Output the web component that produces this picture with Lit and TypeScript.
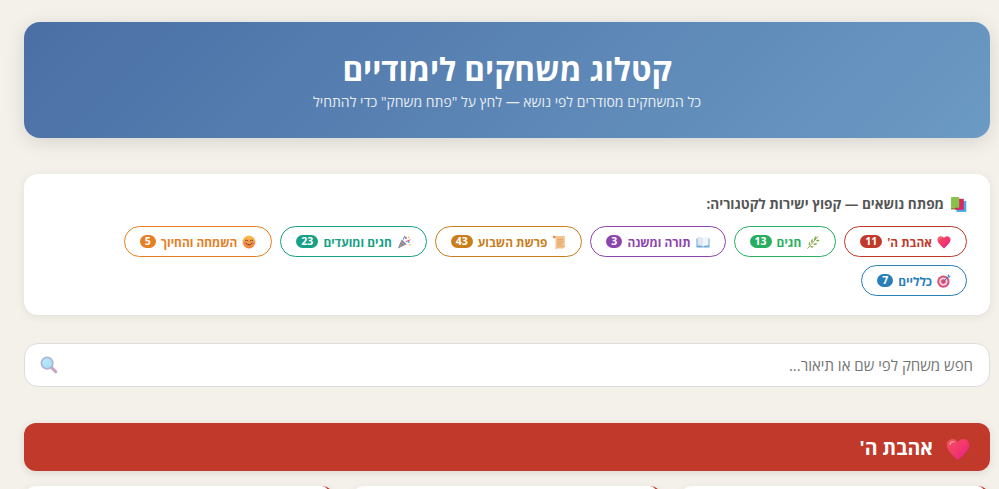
import { LitElement, html, css, svg } from "lit";
import { customElement } from "lit/decorators.js";

const defs = svg`<svg width="0" height="0" class="defs" aria-hidden="true"><defs>
  <linearGradient id="gh" x1="0" y1="0" x2="1" y2="1"><stop offset="0" stop-color="#f2555a"/><stop offset="0.55" stop-color="#f4346f"/><stop offset="1" stop-color="#d61f9a"/></linearGradient>
  <linearGradient id="gs" x1="0" y1="0" x2="0" y2="1"><stop offset="0" stop-color="#fcc04f"/><stop offset="1" stop-color="#f0803c"/></linearGradient>
  <linearGradient id="gl" x1="0" y1="0" x2="1" y2="1"><stop offset="0" stop-color="#bdeafa"/><stop offset="1" stop-color="#9fdff5"/></linearGradient>
</defs></svg>`;

const icons: Record<string, unknown> = {
  heart: svg`<path d="M12 23 C4.5 16.5 .8 12.5 .8 7.8 C.8 4.2 3.6 2 6.8 2 C9 2 11 3.2 12 5.3 C13 3.2 15 2 17.2 2 C20.4 2 23.2 4.2 23.2 7.8 C23.2 12.5 19.5 16.5 12 23 Z" fill="url(#gh)"/><path d="M4 7.5 C4.5 5.3 6.3 4.5 8 4.8" stroke="#f9a0a0" stroke-width="1.2" fill="none" stroke-linecap="round"/>`,
  books: svg`<rect x="9" y="7" width="14" height="15.5" fill="#4aa8ec"/><rect x="7" y="4" width="12.5" height="15.5" fill="#d8285e"/><rect x="1.5" y="1.5" width="11.5" height="15" fill="#86c24a"/><rect x="1.5" y="16.5" width="5.5" height="2.5" fill="#5d9a35"/>`,
  herb: svg`<path d="M3 23 C8 17 13 12 20 3" stroke="#8a9a4a" stroke-width="1.5" fill="none" stroke-linecap="round"/><path d="M14 9 C13 6 15 3 17.5 1.5 C18.5 5 17 8 14 9 Z M17 10 C19 8 21 8 23.5 9 C21 12 19 12 17 10 Z M9 14 C8 11 9 8 11 6.5 C12.5 10 12 12 9 14 Z M12 16 C14 14 17 14 19.5 15 C17 18 14 18 12 16 Z M5 18.5 C4 16 5 13 6 11.5 C8 14 7.5 17 5 18.5 Z M7 20 C9 18 12 19 13.5 20 C11 22.5 9 22 7 20 Z" fill="#86ad4e"/>`,
  book: svg`<path d="M.8 6 H12 V21.5 H.8 Z M12 6 H23.2 V21.5 H12 Z" fill="#6fa8dc"/><path d="M2.5 3.5 C6 3 10 3.5 12 5.5 V20 C10 18 6 17.5 2.5 18 Z" fill="#dfe8f2"/><path d="M21.5 3.5 C18 3 14 3.5 12 5.5 V20 C14 18 18 17.5 21.5 18 Z" fill="#f0f5fa"/>`,
  scroll: svg`<path d="M5 1.5 H22 V19 C22 22 20 23 18 23 H6 V5 C6 3.5 5.6 2.2 5 1.5 Z" fill="#f3c48f"/><path d="M1.5 2.5 C1.5 1.2 3.5 .8 5 1.5 C6 2.2 6 4 6 5.5 H1.5 Z" fill="#d9925a"/><path d="M9 7.5 H19 M9 10.5 H19 M9 13.5 H19 M9 16.5 H16" stroke="#dc9a62" stroke-width="1.2"/><path d="M6 23 C9 23 10 21.5 10 19.5 H22" stroke="#e0a46e" stroke-width="1" fill="none"/>`,
  party: svg`<path d="M1.5 23 L8 7.5 L16.5 16 Z" fill="#6f7fb8"/><path d="M4.5 16 L8.5 20 M6.5 11 L13 17.5" stroke="#e0a35a" stroke-width="1.8"/><circle cx="15" cy="5" r="1.8" fill="#e8467c"/><circle cx="20" cy="12" r="1.8" fill="#41b6e6"/><path d="M11 8 C11 5 12 3 14 1.5" stroke="#46b3e6" stroke-width="1.8" fill="none"/><path d="M15 12 C17 10 20 10 23 8" stroke="#e8467c" stroke-width="1.8" fill="none"/><circle cx="20" cy="4" r="1.5" fill="#f2c230"/><circle cx="22" cy="17" r="1.4" fill="#f2c230"/>`,
  smile: svg`<circle cx="12" cy="12" r="11" fill="url(#gs)"/><ellipse cx="5.5" cy="14" rx="2.6" ry="1.7" fill="#f3636e" opacity=".7"/><ellipse cx="18.5" cy="14" rx="2.6" ry="1.7" fill="#f3636e" opacity=".7"/><path d="M5.5 10 Q8 6.8 10.2 10 M13.8 10 Q16 6.8 18.5 10" stroke="#6b3a2a" stroke-width="1.6" fill="none" stroke-linecap="round"/><path d="M7.2 14.5 Q12 20 16.8 14.5" stroke="#6b3a2a" stroke-width="1.7" fill="none" stroke-linecap="round"/>`,
  target: svg`<circle cx="11" cy="13" r="10.5" fill="#d94f77"/><circle cx="11" cy="13" r="7.2" fill="#f3d3dc"/><circle cx="11" cy="13" r="4.2" fill="#d94f77"/><path d="M11 13 L20 4" stroke="#4a6fa5" stroke-width="1.6"/><path d="M18 2.5 L18.5 5.5 L21.5 6 L23.8 3.5 L20.8 3.2 L20.5 .2 Z" fill="#3f9be0"/>`,
  glass: svg`<path d="M14.5 14.5 L21 21" stroke="#c9a3c7" stroke-width="4.2" stroke-linecap="round"/><circle cx="9.5" cy="9.5" r="7.6" fill="url(#gl)" stroke="#b3b3d6" stroke-width="2.2"/>`,
};

const cats = [
  { icon: "heart", label: "אהבת ה'", n: 11, c: "#c0392b" },
  { icon: "herb", label: "חגים", n: 13, c: "#27ae60" },
  { icon: "book", label: "תורה ומשנה", n: 3, c: "#8e44ad" },
  { icon: "scroll", label: "פרשת השבוע", n: 43, c: "#ca7d1b" },
  { icon: "party", label: "חגים ומועדים", n: 23, c: "#16a085" },
  { icon: "smile", label: "השמחה והחיוך", n: 5, c: "#e67e22" },
  { icon: "target", label: "כלליים", n: 7, c: "#2980b9" },
];

const ic = (name: string, cls = "") =>
  html`<svg class="ic ${cls}" viewBox="0 0 24 24" aria-hidden="true">${icons[name]}</svg>`;

@customElement("app-root")
export class AppRoot extends LitElement {
  static styles = css`
    :host {
      display: block;
      height: 489px;
      overflow: hidden;
      background: #f4f0ea;
      font-family: "Open Sans", "Liberation Sans", sans-serif;
      direction: rtl;
      color: #333;
    }
    .defs { position: absolute; }
    .page {
      display: flex;
      flex-direction: column;
      padding: 22px 9px 0 24px;
    }
    .ic { width: 14px; height: 14px; flex: none; }
    .hero {
      height: 116px;
      box-sizing: border-box;
      border-radius: 16px;
      background: linear-gradient(135deg, #4a6fa5, #6b9ac4);
      box-shadow: 0 4px 20px rgba(0, 0, 0, 0.12);
      color: #fff;
      text-align: center;
      padding-top: 25px;
    }
    h1 {
      margin: 0;
      font-size: 31.5px;
      line-height: 43px;
      font-weight: 700;
    }
    .sub {
      margin-top: 2px;
      font-size: 14px;
      line-height: 19px;
      opacity: 0.85;
    }
    .toc {
      margin-top: 36px;
      height: 141px;
      box-sizing: border-box;
      background: #fff;
      border-radius: 14px;
      box-shadow: 0 2px 10px rgba(0, 0, 0, 0.07);
      padding: 20px 23px 0;
    }
    .toc h2 {
      margin: 0 0 12px;
      display: flex;
      align-items: center;
      gap: 6px;
      font-size: 13.6px;
      line-height: 20px;
      font-weight: 700;
      color: #555;
    }
    .toc h2 .ic { width: 17px; height: 17px; }
    .chips {
      display: flex;
      flex-wrap: wrap;
      gap: 8px;
    }
    .chip {
      display: inline-flex;
      align-items: center;
      gap: 5px;
      height: 31px;
      box-sizing: border-box;
      padding: 0 15px;
      border: 1.5px solid;
      border-radius: 20px;
      font-size: 11.9px;
      font-weight: 700;
      white-space: nowrap;
    }
    .badge {
      color: #fff;
      border-radius: 10px;
      padding: 0 5px;
      font-size: 10.5px;
      line-height: 13px;
    }
    .search {
      margin-top: 28px;
      height: 44px;
      box-sizing: border-box;
      background: #fff;
      border: 1.5px solid #ddd;
      border-radius: 14px;
      display: flex;
      align-items: center;
      justify-content: space-between;
      padding: 0 16px 0 15px;
      font-size: 15px;
      color: #757575;
    }
    .search .ic { width: 18px; height: 18px; }
    .section {
      margin-top: 36px;
      height: 48px;
      box-sizing: border-box;
      background: #c0392b;
      border-radius: 12px;
      box-shadow: 0 2px 8px rgba(0, 0, 0, 0.1);
      color: #fff;
      display: flex;
      align-items: center;
      gap: 13px;
      padding: 0 20px;
      font-size: 19.5px;
      font-weight: 700;
    }
    .section .ic { width: 24px; height: 24px; margin-top: 4px; }
    .grid {
      margin-top: 15px;
      display: grid;
      grid-template-columns: repeat(3, 1fr);
      gap: 18px;
    }
    .card {
      height: 200px;
      background: #fff;
      border-radius: 12px;
      border-right: 4px solid #c0392b;
      box-shadow: 0 2px 8px rgba(0, 0, 0, 0.07);
    }
  `;

  render() {
    return html`${defs}<div class="page">
      <header class="hero">
        <h1>קטלוג משחקים לימודיים</h1>
        <div class="sub">כל המשחקים מסודרים לפי נושא — לחץ על "פתח משחק" כדי להתחיל</div>
      </header>
      <nav class="toc">
        <h2>${ic("books")}<span>מפתח נושאים — קפוץ ישירות לקטגוריה:</span></h2>
        <div class="chips">
          ${cats.map(
            (x) => html`<span class="chip" style="color:${x.c};border-color:${x.c}">
              ${ic(x.icon)}<span>${x.label}</span>
              <span class="badge" style="background:${x.c}">${x.n}</span>
            </span>`
          )}
        </div>
      </nav>
      <div class="search">
        <span>חפש משחק לפי שם או תיאור...</span>
        ${ic("glass")}
      </div>
      <div class="section">${ic("heart")}<span>אהבת ה'</span></div>
      <div class="grid">
        <div class="card"></div>
        <div class="card"></div>
        <div class="card"></div>
      </div>
    </div>`;
  }
}
